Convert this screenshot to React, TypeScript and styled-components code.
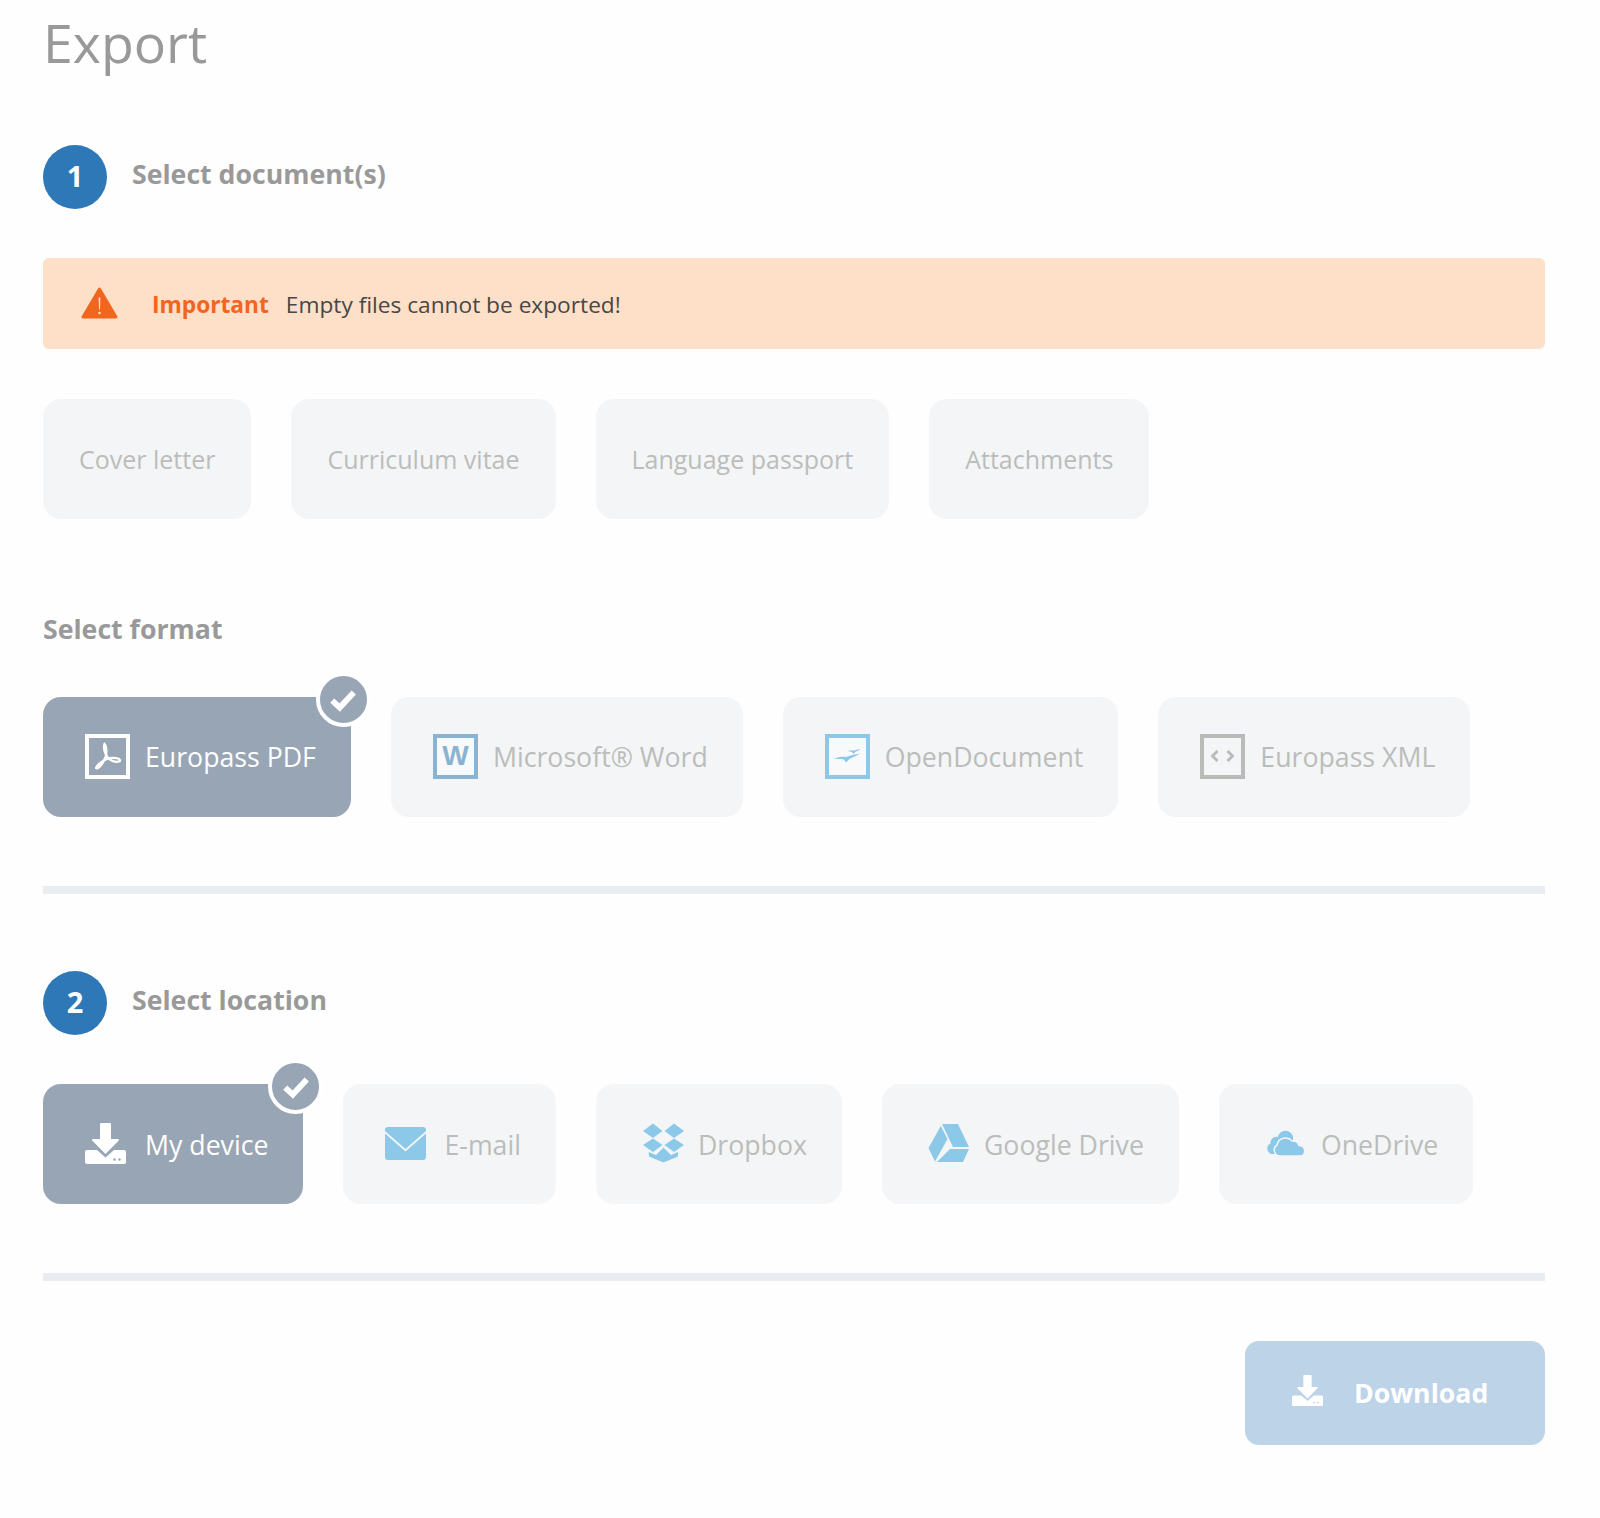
import React from "react";
import styled, { createGlobalStyle } from "styled-components";

const GlobalStyle = createGlobalStyle`
  html, body {
    margin: 0;
    padding: 0;
    background: #fefefe;
    font-family: "Open Sans", "Liberation Sans", sans-serif;
  }
`;

const Page = styled.main`
  width: 1502px;
  height: 1518px;
  margin-left: 43px;
  box-sizing: border-box;
`;

const Title = styled.h1`
  margin: 0 0 65px;
  height: 80px;
  font-size: 53.7px;
  line-height: 86px;
  font-weight: 400;
  color: #999999;
`;

const StepHeader = styled.div<{ $after: number }>`
  display: flex;
  align-items: center;
  gap: 25px;
  height: 64px;
  margin-bottom: ${({ $after }) => $after}px;
`;

const StepNumber = styled.div`
  width: 64px;
  height: 64px;
  box-sizing: border-box;
  padding-bottom: 3px;
  border-radius: 50%;
  background: #2e78b7;
  color: #ffffff;
  display: flex;
  align-items: center;
  justify-content: center;
  font-size: 29px;
  font-weight: 700;
`;

const SectionLabel = styled.h2`
  margin: 0;
  font-size: 26.7px;
  font-weight: 700;
  color: #999999;
  position: relative;
  top: -4px;
`;

const FormatLabel = styled(SectionLabel)`
  top: 0;
  line-height: 40px;
  margin: 90px 0 48px;
`;

const Alert = styled.div`
  height: 91px;
  box-sizing: border-box;
  padding: 2px 38px 0;
  display: flex;
  align-items: center;
  background: #fedfc8;
  border-radius: 6px;
  font-size: 22.7px;
  color: #474747;
  margin-bottom: 50px;
`;

const AlertTitle = styled.strong`
  color: #f0661e;
  font-weight: 700;
  margin: 0 17px 0 34px;
`;

const OptionRow = styled.div`
  display: flex;
  gap: 40px;
`;

const OptionButton = styled.button<{ $selected?: boolean; $left?: number; $gap?: number; $lift?: boolean }>`
  position: relative;
  height: 120px;
  padding: 0 35px ${({ $lift }) => ($lift ? 2 : 0)}px ${({ $left }) => $left ?? 36}px;
  border: 0;
  border-radius: 18px;
  display: flex;
  align-items: center;
  gap: ${({ $gap }) => $gap ?? 15}px;
  font-family: inherit;
  font-size: 26.7px;
  background: ${({ $selected }) => ($selected ? "#98a5b4" : "#f4f5f7")};
  color: ${({ $selected }) => ($selected ? "#ffffff" : "#bbbdba")};
`;

const DocumentButton = styled(OptionButton)`
  font-size: 25px;
  padding-right: 36px;
`;

const CheckBadge = styled.span`
  position: absolute;
  top: -25px;
  right: -20px;
  width: 55px;
  height: 55px;
  box-sizing: border-box;
  border: 4px solid #ffffff;
  border-radius: 50%;
  background: #98a5b4;
  display: flex;
  align-items: center;
  justify-content: center;
`;

const FileBox = styled.span<{ $color: string; $inner?: string }>`
  width: 45px;
  height: 45px;
  box-sizing: border-box;
  border: 4px solid ${({ $color }) => $color};
  background: ${({ $inner }) => $inner ?? "transparent"};
  display: flex;
  align-items: center;
  justify-content: center;
  flex: none;
`;

const WordLetter = styled.span`
  font-family: "Liberation Sans", sans-serif;
  font-weight: 700;
  font-size: 28px;
  line-height: 1;
  color: #8ab3d1;
`;

const Glyph = styled.svg<{ $raise?: number }>`
  flex: none;
  margin-bottom: ${({ $raise }) => $raise ?? 2}px;
`;

const Divider = styled.hr<{ $top: number; $bottom: number }>`
  border: 0;
  height: 8px;
  background: #e9edf1;
  margin: ${({ $top }) => $top}px 0 ${({ $bottom }) => $bottom}px;
`;

const Footer = styled.div`
  display: flex;
  justify-content: flex-end;
`;

const DownloadButton = styled.button`
  width: 300px;
  height: 104px;
  border: 0;
  border-radius: 14px;
  background: #bcd3e8;
  color: #ffffff;
  font-family: inherit;
  font-size: 26.7px;
  font-weight: 700;
  display: flex;
  align-items: center;
  gap: 31px;
  padding: 0 0 2px 47px;
`;

const Check = () => (
  <svg width="28" height="24" viewBox="0 0 26 22" fill="none">
    <path d="M3 11.5 L10 18 L23 4" stroke="#fff" strokeWidth="5.4" />
  </svg>
);

const DeviceIcon = ({ size = 41, dots, raise }: { size?: number; dots: string; raise?: number }) => (
  <Glyph width={size} height={size} viewBox="0 0 41 41" $raise={raise}>
    <path fill="#fff" d="M16 0 H25 a1 1 0 0 1 1 1 V16 H33 a1 1 0 0 1 .8 1.6 L20.5 31 L7.2 17.6 A1 1 0 0 1 8 16 H15 V1 a1 1 0 0 1 1-1 Z" />
    <path fill="#fff" d="M2 27 H12 L20.5 34.5 L29 27 H39 a2 2 0 0 1 2 2 V39 a2 2 0 0 1-2 2 H2 a2 2 0 0 1-2-2 V29 a2 2 0 0 1 2-2 Z" />
    <circle cx="29.5" cy="36.5" r="1.2" fill={dots} />
    <circle cx="34.5" cy="36.5" r="1.2" fill={dots} />
  </Glyph>
);

const PdfIcon = () => (
  <FileBox $color="#ffffff">
    <svg width="37" height="37" viewBox="4 4 37 37" fill="none">
      <path
        stroke="#fff"
        strokeWidth="2.3"
        d="M19.5 10 C18 14 20 20 23 24 C26 27 31 29 35 27 C36 24 28 23 22 25 C17 27 12 31 11 34 C13 36 18 30 21 22 C21.5 18 21.5 12 19.5 10 Z"
      />
    </svg>
  </FileBox>
);

const GullsIcon = () => (
  <FileBox $color="#8cc8e8" $inner="#f8f9fb">
    <svg width="37" height="37" viewBox="4 4 37 37">
      <path fill="#8cc8e8" d="M9 25 C14 22.5 18 22.5 21 23 C25 21.5 30 20.5 35 19.5 C31 22 27 24 24.5 25 C23.5 26 22 27.5 21 28.5 C20 26.5 19 25.5 17 25 C14 24.8 11 25 9 25 Z" />
      <path fill="#8cc8e8" d="M22 17 C24 16 27 16.5 28.5 16.5 C30.5 16 33 15.5 35.5 15 C33.5 17 31 17.5 30 18 L28.5 20.5 C28 18.5 27 17.8 26 17.7 C24.5 17.5 23 17.2 22 17 Z" />
    </svg>
  </FileBox>
);

const XmlIcon = () => (
  <FileBox $color="#b9bbb8">
    <svg width="37" height="37" viewBox="4 4 37 37" fill="none">
      <path stroke="#b9bbb8" strokeWidth="2.8" d="M17.5 17 L12.5 22 L17.5 27 M27.5 17 L32.5 22 L27.5 27" />
    </svg>
  </FileBox>
);

const MailIcon = () => (
  <Glyph width="41" height="33" viewBox="0 0 41 33" fill="#8cc8e8">
    <path d="M3 0 H38 a3 3 0 0 1 3 3 V4 L20.5 22 L0 4 V3 a3 3 0 0 1 3-3 Z" />
    <path d="M0 6.5 L20.5 24.5 L41 6.5 V30 a3 3 0 0 1-3 3 H3 a3 3 0 0 1-3-3 Z" />
  </Glyph>
);

const DropboxIcon = () => (
  <Glyph width="41" height="40" viewBox="0 0 41 40" fill="#8cc8e8">
    <polygon points="0,8 10,0.5 19.5,8 10,15" />
    <polygon points="21.5,8 31,0.5 41,8 31,15" />
    <polygon points="0,22 10,15.5 19.5,22 10,29" />
    <polygon points="21.5,22 31,15.5 41,22 31,29" />
    <polygon points="5.7,29 13,32 20.5,24.5 28,32 35,29 35,33.5 20.5,39.5 6,33.5" />
  </Glyph>
);

const DriveIcon = () => (
  <Glyph width="41" height="38" viewBox="0 0 41 38" fill="#8cc8e8">
    <polygon points="14,0 30,0 41,23 25,23" />
    <polygon points="12.8,2 0.5,24 7,37.5 19.5,15" />
    <polygon points="22,25 41,25 35,38 9,38" />
  </Glyph>
);

const OneDriveIcon = () => (
  <Glyph width="41" height="27" viewBox="0 0 41 27" fill="#8cc8e8" $raise={4}>
    <path d="M8 25 A5.5 5.5 0 0 1 5.5 14.5 A6 6 0 0 1 13 8 A7.6 7.6 0 0 1 28 8 L28 14 L14 25 Z" />
    <path
      stroke="#f4f5f7"
      strokeWidth="1.5"
      d="M15 27 A6 6 0 0 1 12 16 A8.6 8.6 0 0 1 27 12 A6 6 0 0 1 34 16.5 A5.5 5.5 0 0 1 36.5 27 Z"
    />
  </Glyph>
);

const WarningIcon = () => (
  <Glyph width="37" height="32" viewBox="0 0 37 32" $raise={4}>
    <path fill="#f0661e" stroke="#f0661e" strokeWidth="3" strokeLinejoin="round" d="M18.5 2 L35 30 H2 Z" />
    <path fill="#fedfc8" d="M17.6 10.5 H19.4 L19 22.5 H18 Z" />
    <circle cx="18.5" cy="26" r="1.3" fill="#fedfc8" />
  </Glyph>
);

export default function App() {
  return (
    <Page>
      <GlobalStyle />
      <Title>Export</Title>

      <StepHeader $after={49}>
        <StepNumber>1</StepNumber>
        <SectionLabel>Select document(s)</SectionLabel>
      </StepHeader>

      <Alert>
        <WarningIcon />
        <AlertTitle>Important</AlertTitle>
        Empty files cannot be exported!
      </Alert>

      <OptionRow>
        <DocumentButton>Cover letter</DocumentButton>
        <DocumentButton>Curriculum vitae</DocumentButton>
        <DocumentButton>Language passport</DocumentButton>
        <DocumentButton>Attachments</DocumentButton>
      </OptionRow>

      <FormatLabel>Select format</FormatLabel>

      <OptionRow>
        <OptionButton $selected $left={42} $lift>
          <PdfIcon />
          Europass PDF
          <CheckBadge>
            <Check />
          </CheckBadge>
        </OptionButton>
        <OptionButton $left={42} $lift>
          <FileBox $color="#8ab3d1" $inner="#f8f9fb">
            <WordLetter>W</WordLetter>
          </FileBox>
          Microsoft® Word
        </OptionButton>
        <OptionButton $left={42} $lift>
          <GullsIcon />
          OpenDocument
        </OptionButton>
        <OptionButton $left={42} $lift>
          <XmlIcon />
          Europass XML
        </OptionButton>
      </OptionRow>

      <Divider $top={69} $bottom={77} />

      <StepHeader $after={49}>
        <StepNumber>2</StepNumber>
        <SectionLabel>Select location</SectionLabel>
      </StepHeader>

      <OptionRow>
        <OptionButton $selected $left={42} $gap={19}>
          <DeviceIcon dots="#98a5b4" />
          My device
          <CheckBadge>
            <Check />
          </CheckBadge>
        </OptionButton>
        <OptionButton $left={42} $gap={18}>
          <MailIcon />
          E-mail
        </OptionButton>
        <OptionButton $left={47} $gap={14}>
          <DropboxIcon />
          Dropbox
        </OptionButton>
        <OptionButton $left={46} $gap={15}>
          <DriveIcon />
          Google Drive
        </OptionButton>
        <OptionButton $left={46} $gap={15}>
          <OneDriveIcon />
          OneDrive
        </OptionButton>
      </OptionRow>

      <Divider $top={69} $bottom={60} />

      <Footer>
        <DownloadButton>
          <DeviceIcon size={31} dots="#bcd3e8" raise={4} />
          Download
        </DownloadButton>
      </Footer>
    </Page>
  );
}
